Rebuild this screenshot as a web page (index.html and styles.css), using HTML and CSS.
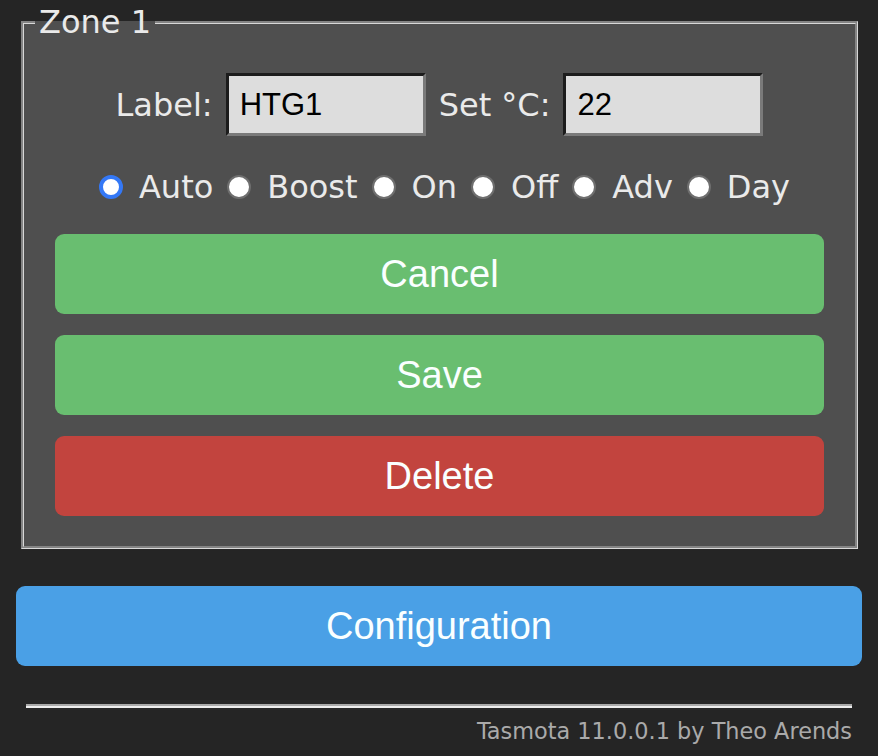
FILE: index.html
```html
<!DOCTYPE html>
<html lang="en">
<head>
<meta charset="utf-8">
<title>Tasmota</title>
<link rel="stylesheet" href="styles.css">
</head>
<body>
<div class="page">
  <fieldset class="zone">
    <legend class="zone-title">Zone 1</legend>
    <div class="zone-body">
      <div class="field-row">
        <label class="field-label" for="lbl">Label:</label>
        <input id="lbl" class="text-input" type="text" value="HTG1">
        <label class="field-label" for="setp">Set °C:</label>
        <input id="setp" class="text-input" type="text" value="22">
      </div>
      <div class="mode-row">
        <label class="mode"><input class="radio" type="radio" name="mode" checked><span>Auto</span></label>
        <label class="mode"><input class="radio" type="radio" name="mode"><span>Boost</span></label>
        <label class="mode"><input class="radio" type="radio" name="mode"><span>On</span></label>
        <label class="mode"><input class="radio" type="radio" name="mode"><span>Off</span></label>
        <label class="mode"><input class="radio" type="radio" name="mode"><span>Adv</span></label>
        <label class="mode"><input class="radio" type="radio" name="mode"><span>Day</span></label>
      </div>
      <div class="actions">
        <button class="btn btn-green" type="button">Cancel</button>
        <button class="btn btn-green" type="button">Save</button>
        <button class="btn btn-red" type="button">Delete</button>
      </div>
    </div>
  </fieldset>
  <button class="btn btn-blue btn-config" type="button">Configuration</button>
  <hr class="footer-rule">
  <div class="footer">Tasmota 11.0.0.1 by Theo Arends</div>
</div>
</body>
</html>
```

FILE: styles.css
```css
html, body {
  margin: 0;
  padding: 0;
  background: #252525;
}

body {
  font-family: "DejaVu Sans", Verdana, sans-serif;
  color: #eaeaea;
}

.page {
  padding: 4px 16px 0;
}

.zone {
  margin: 0 4px 0 5px;
  padding: 0 11px 30px;
  border: 3px groove #d8d8d8;
  background: #4f4f4f;
  min-width: 0;
}

.zone-title {
  padding: 0 4px;
  font-size: 32px;
  line-height: 36px;
  color: #eaeaea;
}

.zone-body {
  display: flex;
  flex-direction: column;
  padding: 0 20px;
}

.field-row {
  display: flex;
  align-items: center;
  justify-content: center;
  gap: 13px;
  margin-top: 33px;
}

.field-label {
  font-size: 32px;
  line-height: 36px;
  color: #eaeaea;
}

.text-input {
  box-sizing: border-box;
  width: 200px;
  height: 63px;
  margin: 0;
  padding: 0 11px;
  border-style: solid;
  border-width: 3px;
  border-color: #1c1c1c #7a7a7a #7a7a7a #1c1c1c;
  background: #dddddd;
  color: #000;
  font-family: "Liberation Sans", Arial, sans-serif;
  font-size: 31px;
  outline: none;
}

.mode-row {
  display: flex;
  align-items: center;
  justify-content: center;
  gap: 14px;
  margin-top: 33px;
  height: 36px;
  padding-left: 10px;
}

.mode {
  display: flex;
  align-items: center;
  gap: 16px;
  font-size: 32px;
  line-height: 36px;
  color: #eaeaea;
}

.radio {
  appearance: none;
  -webkit-appearance: none;
  box-sizing: border-box;
  width: 24px;
  height: 24px;
  margin: 0;
  border-radius: 50%;
  border: 2px solid #6e6e6e;
  background: #ffffff;
}

.radio:checked {
  border: 4px solid #3478f6;
}

.actions {
  display: flex;
  flex-direction: column;
  gap: 21px;
  margin-top: 29px;
}

.btn {
  display: block;
  width: 100%;
  height: 80px;
  margin: 0;
  padding: 0;
  border: 0;
  border-radius: 9px;
  color: #faffff;
  font-family: "Liberation Sans", Arial, sans-serif;
  font-size: 38px;
  line-height: 80px;
}

.btn-green {
  background: #69be70;
}

.btn-red {
  background: #c2443e;
}

.btn-blue {
  background: #4aa0e6;
}

.btn-config {
  margin-top: 37px;
}

.footer-rule {
  margin: 38px 10px 0;
  height: 0;
  border: 0;
  border-top: 2px solid #a9a9a9;
  border-bottom: 2px solid #ececec;
}

.footer {
  margin-top: 10px;
  padding-right: 10px;
  text-align: right;
  font-size: 22.4px;
  line-height: 26px;
  color: #aaaaaa;
}
```
